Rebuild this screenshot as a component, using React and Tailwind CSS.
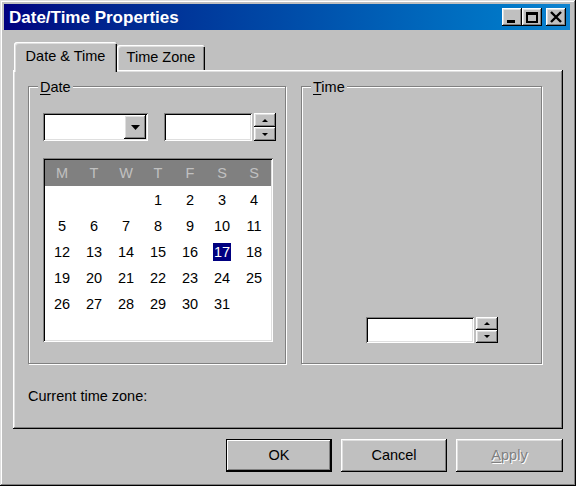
import React from "react";

const RAISED =
  "shadow-[inset_-1px_-1px_#000,inset_1px_1px_#fff,inset_-2px_-2px_#808080,inset_2px_2px_#dfdfdf]";
const SUNKEN =
  "shadow-[inset_1px_1px_#808080,inset_-1px_-1px_#fff,inset_2px_2px_#000,inset_-2px_-2px_#dfdfdf]";

function TriDown({ w = 9, h = 5 }) {
  return (
    <svg width={w} height={h} viewBox={`0 0 ${w} ${h}`} className="block">
      <polygon points={`0,0 ${w},0 ${w / 2},${h}`} fill="#000" />
    </svg>
  );
}
function TriUp({ w = 9, h = 5 }) {
  return (
    <svg width={w} height={h} viewBox={`0 0 ${w} ${h}`} className="block">
      <polygon points={`0,${h} ${w},${h} ${w / 2},0`} fill="#000" />
    </svg>
  );
}

function Spin({ h }) {
  return (
    <div className={`flex flex-col w-[22px] ${h}`}>
      <div className={`flex-1 flex items-center justify-center bg-[#c0c0c0] ${RAISED}`}>
        <TriUp w={6} h={3} />
      </div>
      <div className={`flex-1 flex items-center justify-center bg-[#c0c0c0] ${RAISED}`}>
        <TriDown w={6} h={3} />
      </div>
    </div>
  );
}

function TitleButton({ children, className = "" }) {
  return (
    <div
      className={`w-[20px] h-[18px] bg-[#c0c0c0] flex items-center justify-center ${RAISED} ${className}`}
    >
      {children}
    </div>
  );
}

const days = [
  [null, null, null, 1, 2, 3, 4],
  [5, 6, 7, 8, 9, 10, 11],
  [12, 13, 14, 15, 16, 17, 18],
  [19, 20, 21, 22, 23, 24, 25],
  [26, 27, 28, 29, 30, 31, null],
];

function Calendar() {
  return (
    <div className={`mt-[17px] w-[230px] h-[184px] bg-white p-[2px] ${SUNKEN}`}>
      <div className="h-[26px] bg-[#808080] grid grid-cols-[repeat(7,32px)] pl-[1px] items-center text-[#c0c0c0]">
        {["M", "T", "W", "T", "F", "S", "S"].map((d, i) => (
          <div key={i} className="text-center leading-[26px]">
            {d}
          </div>
        ))}
      </div>
      <div className="pt-[1px] pl-[1px]">
        {days.map((row, r) => (
          <div key={r} className="grid grid-cols-[repeat(7,32px)] h-[26px] items-center">
            {row.map((d, i) => (
              <div key={i} className="text-center leading-[26px]">
                {d === 17 ? (
                  <span className="inline-block bg-[#000080] text-white h-[18px] leading-[18px] px-[1px]">
                    17
                  </span>
                ) : (
                  d ?? ""
                )}
              </div>
            ))}
          </div>
        ))}
      </div>
    </div>
  );
}

function Group({ label, className = "", children }) {
  return (
    <div
      className={`relative border border-[#808080] shadow-[inset_1px_1px_#fff,1px_1px_#fff] ${className}`}
    >
      <div className="absolute left-[9px] top-[-8px] px-[2px] bg-[#c0c0c0] leading-[17px]">
        {label}
      </div>
      {children}
    </div>
  );
}

export default function App() {
  return (
    <div
      className={`w-[576px] h-[486px] bg-[#c0c0c0] flex flex-col pt-[4px] pl-[4px] pr-[6px] text-[14.5px] text-black font-['Liberation_Sans',Arial,sans-serif] shadow-[inset_-1px_-1px_#000,inset_1px_1px_#dfdfdf,inset_-2px_-2px_#808080,inset_2px_2px_#fff]`}
    >
      {/* Title bar */}
      <div className="h-[26px] flex items-center bg-linear-to-r from-[#000080] to-[#1084d0] pl-[5px] pr-[4px]">
        <div className="text-white font-bold text-[17px] leading-none flex-1">
          Date/Time Properties
        </div>
        <div className="flex items-center">
          <TitleButton>
            <svg width="20" height="18" viewBox="0 0 20 18" className="block">
              <rect x="5" y="12" width="8" height="3" fill="#000" />
            </svg>
          </TitleButton>
          <TitleButton>
            <svg width="20" height="18" viewBox="0 0 20 18" className="block">
              <rect x="4" y="4" width="12" height="11" fill="#000" />
              <rect x="6" y="7" width="8" height="6" fill="#c0c0c0" />
            </svg>
          </TitleButton>
          <TitleButton className="ml-[4px]">
            <svg width="20" height="18" viewBox="0 0 20 18" className="block">
              <path d="M5 4 L15 14 M15 4 L5 14" stroke="#000" strokeWidth="2.4" />
            </svg>
          </TitleButton>
        </div>
      </div>

      <div className="ml-[9px] mt-[12px] w-[550px] flex flex-col">
        {/* Tabs */}
        <div className="h-[28px] flex items-end">
          <div
            className={`relative z-10 self-start ml-[1px] w-[103px] h-[30px] bg-[#c0c0c0] rounded-t-[3px] flex items-center justify-center pb-[1px] shadow-[inset_1px_1px_#fff,inset_2px_2px_#dfdfdf,inset_-1px_0_#000,inset_-2px_0_#808080]`}
          >
            Date &amp; Time
          </div>
          <div
            className={`w-[88px] h-[25px] bg-[#c0c0c0] rounded-t-[3px] flex items-center justify-center pt-[1px] shadow-[inset_1px_1px_#fff,inset_2px_2px_#dfdfdf,inset_-1px_0_#000,inset_-2px_0_#808080]`}
          >
            Time Zone
          </div>
        </div>

        {/* Panel */}
        <div
          className={`h-[359px] bg-[#c0c0c0] flex flex-col pt-[16px] pl-[15px] shadow-[inset_-1px_-1px_#000,inset_1px_1px_#fff,inset_-2px_-2px_#808080,inset_2px_2px_#dfdfdf]`}
        >
          <div className="flex gap-[15px]">
            <Group
              label={
                <span>
                  <u className="underline-offset-2">D</u>ate
                </span>
              }
              className="w-[258px] h-[278px] pt-[26px] pl-[14px]"
            >
              <div className="flex items-start">
                <div className={`w-[105px] h-[28px] bg-white flex justify-end p-[2px] ${SUNKEN}`}>
                  <div
                    className={`w-[22px] h-[24px] bg-[#c0c0c0] flex items-center justify-center ${RAISED}`}
                  >
                    <TriDown w={9} h={5} />
                  </div>
                </div>
                <div className={`ml-[16px] w-[88px] h-[28px] bg-white ${SUNKEN}`} />
                <div className="ml-[2px]">
                  <Spin h="h-[28px]" />
                </div>
              </div>
              <Calendar />
            </Group>

            <Group
              label={
                <span>
                  <u className="underline-offset-2">T</u>ime
                </span>
              }
              className="w-[241px] h-[278px] flex items-end justify-end pr-[42px] pb-[20px]"
            >
              <div className="flex items-start">
                <div className={`w-[108px] h-[26px] bg-white ${SUNKEN}`} />
                <div className="ml-[2px] w-[23px]">
                  <Spin h="h-[26px]" />
                </div>
              </div>
            </Group>
          </div>
          <div className="mt-[24px] leading-[17px]">Current time zone:</div>
        </div>

        {/* Buttons */}
        <div className="mt-[10px] flex justify-end gap-[9px]">
          <div
            className={`w-[106px] h-[33px] flex items-center justify-center shadow-[inset_0_0_0_1px_#000,inset_-2px_-2px_#000,inset_2px_2px_#fff,inset_-3px_-3px_#808080]`}
          >
            OK
          </div>
          <div className={`w-[106px] h-[33px] flex items-center justify-center ${RAISED}`}>
            Cancel
          </div>
          <div
            className={`w-[107px] h-[33px] flex items-center justify-center text-[#808080] [text-shadow:1px_1px_#fff] ${RAISED}`}
          >
            <span>
              <u className="underline-offset-2">A</u>pply
            </span>
          </div>
        </div>
      </div>
    </div>
  );
}
